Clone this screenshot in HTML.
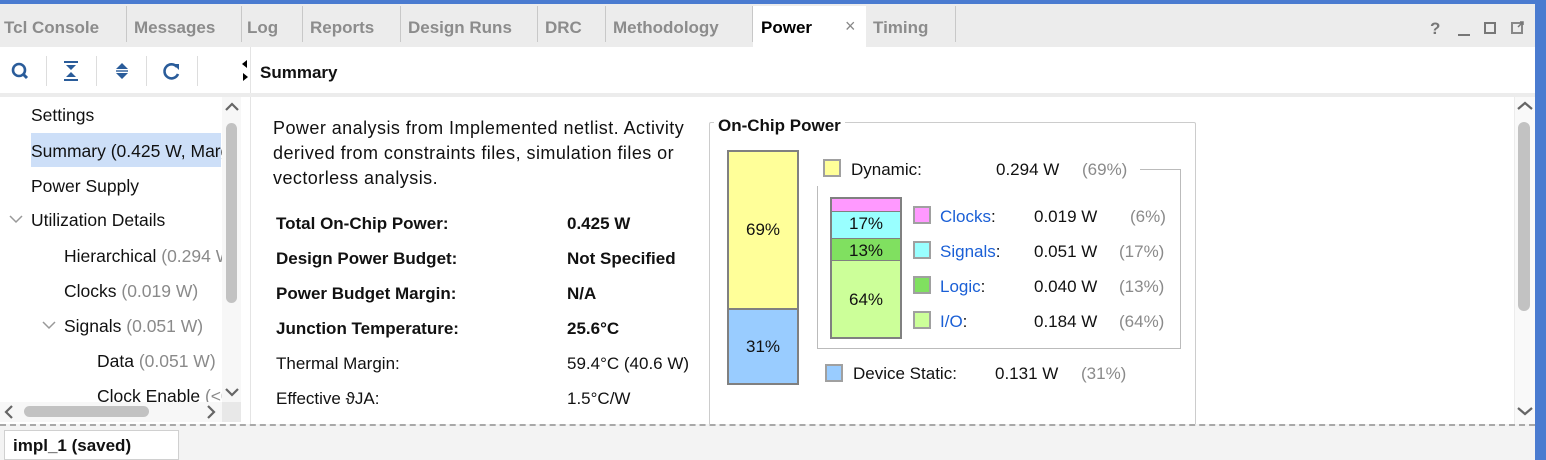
<!DOCTYPE html>
<html><head><meta charset="utf-8"><style>
*{margin:0;padding:0;box-sizing:border-box}
body{width:1546px;height:460px;overflow:hidden;background:#fff;font-family:"Liberation Sans",Arial,sans-serif;font-size:17px;color:#111;position:relative}
.a{position:absolute;white-space:nowrap}
.tab{position:absolute;top:18px;font-weight:bold;color:#8c8c8c;font-size:17px}
.sep{position:absolute;top:6px;width:1px;height:36px;background:#c8c8c8}
.g{color:#8a8a8a}
.b{font-weight:bold}
.lk{color:#1a5fd6}
.sq{position:absolute;width:18px;height:18px;border:2px solid #a0a0a0}
</style></head><body>
<div class="a" style="left:0;top:0;width:1546px;height:4px;background:#4a7bd0"></div>
<div class="a" style="left:1535px;top:0;width:11px;height:460px;background:#4a7bd0"></div>
<div class="a" style="left:0;top:4px;width:1535px;height:43px;background:#ececec"></div>
<div class="a" style="left:753px;top:6px;width:113px;height:41px;background:#fff"></div>
<span class="tab" style="left:4px">Tcl Console</span><div class="sep" style="left:126px"></div>
<span class="tab" style="left:134px">Messages</span><div class="sep" style="left:241px"></div>
<span class="tab" style="left:247px">Log</span><div class="sep" style="left:302px"></div>
<span class="tab" style="left:310px">Reports</span><div class="sep" style="left:400px"></div>
<span class="tab" style="left:408px">Design Runs</span><div class="sep" style="left:537px"></div>
<span class="tab" style="left:545px">DRC</span><div class="sep" style="left:605px"></div>
<span class="tab" style="left:613px">Methodology</span><div class="sep" style="left:752px"></div>
<span class="tab" style="left:761px;color:#000">Power</span>
<span class="a" style="left:845px;top:16px;color:#888;font-size:18px">×</span>
<span class="tab" style="left:873px">Timing</span><div class="sep" style="left:955px"></div>
<span class="a b" style="left:1430px;top:19px;color:#777;font-size:17px">?</span>
<div class="a" style="left:1458px;top:34px;width:12px;height:2px;background:#777"></div>
<div class="a" style="left:1484px;top:22px;width:12px;height:12px;border:2px solid #777"></div>
<div class="a" style="left:1511px;top:22px;width:12px;height:12px;border:2px solid #888"></div>
<svg class="a" style="left:1511px;top:20px" width="14" height="14"><path d="M7 7 L12 2 M9 2 H12 V5" stroke="#777" stroke-width="1.5" fill="none"/></svg>
<svg class="a" style="left:10px;top:61px" width="24" height="22"><circle cx="9" cy="9" r="6" stroke="#2a5c9a" stroke-width="2.6" fill="none"/><path d="M13 13 L17 17" stroke="#2a5c9a" stroke-width="3"/></svg>
<div class="a" style="left:46px;top:56px;width:1px;height:30px;background:#ddd"></div>
<svg class="a" style="left:62px;top:60px" width="18" height="22"><path d="M2 2H16M2 20H16" stroke="#2a5c9a" stroke-width="2"/><path d="M4 5L9 10L14 5ZM4 17L9 12L14 17Z" fill="#2a5c9a"/></svg>
<div class="a" style="left:96px;top:56px;width:1px;height:30px;background:#ddd"></div>
<svg class="a" style="left:113px;top:60px" width="18" height="22"><path d="M3 9L9 3L15 9ZM3 13L9 19L15 13Z" fill="#2a5c9a"/><path d="M3 11H15" stroke="#2a5c9a" stroke-width="1.4"/></svg>
<div class="a" style="left:146px;top:56px;width:1px;height:30px;background:#ddd"></div>
<svg class="a" style="left:162px;top:61px" width="20" height="20"><path d="M15 6 A7 7 0 1 0 16 13" stroke="#2a5c9a" stroke-width="2.6" fill="none"/><path d="M11 3 H17 V9 Z" fill="#2a5c9a"/></svg>
<div class="a" style="left:197px;top:56px;width:1px;height:30px;background:#ddd"></div>
<svg class="a" style="left:241px;top:58px" width="8" height="26"><path d="M6 2 L1 6 L6 10Z M2 15 L7 19 L2 23Z" fill="#000"/></svg>
<div class="a" style="left:250px;top:47px;width:1px;height:378px;background:#e4e4e4"></div>
<span class="a b" style="left:260px;top:63px;font-size:17px">Summary</span>
<div class="a" style="left:0;top:93px;width:1535px;height:4px;background:#ececec"></div>
<div class="a" style="left:31px;top:133px;width:190px;height:34px;background:#cddff8"></div>
<div class="a" style="left:0;top:97px;width:222px;height:305px;overflow:hidden;font-size:17.5px">
<span class="a" style="left:31px;top:8px">Settings</span>
<span class="a" style="left:31px;top:44px">Summary (0.425 W, Margin</span>
<span class="a" style="left:31px;top:79px">Power Supply</span>
<svg class="a" style="left:9px;top:117px" width="14" height="10"><path d="M1 2L7 8L13 2" stroke="#999" stroke-width="1.5" fill="none"/></svg>
<span class="a" style="left:31px;top:113px">Utilization Details</span>
<span class="a" style="left:64px;top:149px">Hierarchical <span class="g">(0.294 W)</span></span>
<span class="a" style="left:64px;top:184px">Clocks <span class="g">(0.019 W)</span></span>
<svg class="a" style="left:42px;top:223px" width="14" height="10"><path d="M1 2L7 8L13 2" stroke="#999" stroke-width="1.5" fill="none"/></svg>
<span class="a" style="left:64px;top:219px">Signals <span class="g">(0.051 W)</span></span>
<span class="a" style="left:97px;top:254px">Data <span class="g">(0.051 W)</span></span>
<span class="a" style="left:97px;top:289px">Clock Enable <span class="g">(&lt;0.001 W)</span></span>
</div>
<div class="a" style="left:222px;top:97px;width:19px;height:305px;background:#f7f7f7"></div>
<svg class="a" style="left:224px;top:101px" width="16" height="12"><path d="M2 9L8 3L14 9" stroke="#666" stroke-width="2.2" fill="none"/></svg>
<div class="a" style="left:226px;top:123px;width:11px;height:180px;background:#c2c2c2;border-radius:6px"></div>
<svg class="a" style="left:224px;top:386px" width="16" height="12"><path d="M2 3L8 9L14 3" stroke="#666" stroke-width="2.2" fill="none"/></svg>
<div class="a" style="left:0;top:402px;width:241px;height:20px;background:#f7f7f7"></div>
<svg class="a" style="left:3px;top:404px" width="12" height="16"><path d="M9 2L3 8L9 14" stroke="#666" stroke-width="2.2" fill="none"/></svg>
<div class="a" style="left:24px;top:406px;width:125px;height:11px;background:#c2c2c2;border-radius:6px"></div>
<svg class="a" style="left:205px;top:404px" width="12" height="16"><path d="M3 2L9 8L3 14" stroke="#666" stroke-width="2.2" fill="none"/></svg>
<div class="a" style="left:222px;top:402px;width:19px;height:20px;background:#e8e8e8"></div>
<div class="a" style="left:1514px;top:97px;width:21px;height:327px;background:#f9f9f9;border-left:1px solid #ececec"></div>
<svg class="a" style="left:1516px;top:100px" width="18" height="12"><path d="M2 9L9 3L16 9" stroke="#666" stroke-width="2.2" fill="none"/></svg>
<div class="a" style="left:1518px;top:122px;width:12px;height:189px;background:#c2c2c2;border-radius:6px"></div>
<svg class="a" style="left:1516px;top:405px" width="18" height="12"><path d="M2 3L9 9L16 3" stroke="#666" stroke-width="2.2" fill="none"/></svg>
<div class="a" style="left:273px;top:116px;line-height:25px;font-size:18px;letter-spacing:0.45px">Power analysis from Implemented netlist. Activity<br>derived from constraints files, simulation files or<br>vectorless analysis.</div>
<span class="a b" style="left:276px;top:214px">Total On-Chip Power:</span><span class="a b" style="left:567px;top:214px">0.425 W</span>
<span class="a b" style="left:276px;top:249px">Design Power Budget:</span><span class="a b" style="left:567px;top:249px">Not Specified</span>
<span class="a b" style="left:276px;top:284px">Power Budget Margin:</span><span class="a b" style="left:567px;top:284px">N/A</span>
<span class="a b" style="left:276px;top:319px">Junction Temperature:</span><span class="a b" style="left:567px;top:319px">25.6°C</span>
<span class="a" style="left:276px;top:354px">Thermal Margin:</span><span class="a" style="left:567px;top:354px">59.4°C (40.6 W)</span>
<span class="a" style="left:276px;top:389px">Effective ϑJA:</span><span class="a" style="left:567px;top:389px">1.5°C/W</span>
<div class="a" style="left:709px;top:122px;width:487px;height:310px;border:1px solid #ccc;border-radius:2px"></div>
<span class="a b" style="left:714px;top:116px;background:#fff;padding:0 4px">On-Chip Power</span>
<div class="a" style="left:727px;top:150px;width:72px;height:235px;border:2px solid #808080;background:#ffff99"></div>
<div class="a" style="left:729px;top:308px;width:68px;height:75px;background:#99ccff;border-top:2px solid #808080"></div>
<span class="a" style="left:746px;top:220px">69%</span>
<span class="a" style="left:746px;top:337px">31%</span>
<div class="sq" style="left:823px;top:159px;background:#ffff99"></div>
<span class="a" style="left:851px;top:160px">Dynamic:</span>
<span class="a" style="left:996px;top:160px">0.294 W</span>
<span class="a g" style="left:1082px;top:160px">(69%)</span>
<div class="a" style="left:1140px;top:169px;width:41px;height:180px;border-top:1px solid #bbb;border-right:1px solid #bbb"></div>
<div class="a" style="left:817px;top:186px;width:364px;height:163px;border-left:1px solid #bbb;border-bottom:1px solid #bbb"></div>
<div class="a" style="left:830px;top:197px;width:72px;height:142px;border:2px solid #808080;background:#ccff99"></div>
<div class="a" style="left:832px;top:199px;width:68px;height:12px;background:#ff99ff"></div>
<div class="a" style="left:832px;top:211px;width:68px;height:27px;background:#99ffff;border-top:1px solid #808080"></div>
<div class="a" style="left:832px;top:238px;width:68px;height:23px;background:#80e060;border-top:1px solid #808080;border-bottom:1px solid #808080"></div>
<span class="a" style="left:849px;top:214px">17%</span>
<span class="a" style="left:849px;top:241px">13%</span>
<span class="a" style="left:849px;top:290px">64%</span>
<div class="sq" style="left:913px;top:206px;background:#ff99ff"></div>
<div class="sq" style="left:913px;top:241px;background:#99ffff"></div>
<div class="sq" style="left:913px;top:276px;background:#80e060"></div>
<div class="sq" style="left:913px;top:311px;background:#ccff99"></div>
<span class="a" style="left:940px;top:207px"><span class="lk">Clocks</span>:</span>
<span class="a" style="left:940px;top:242px"><span class="lk">Signals</span>:</span>
<span class="a" style="left:940px;top:277px"><span class="lk">Logic</span>:</span>
<span class="a" style="left:940px;top:312px"><span class="lk">I/O</span>:</span>
<span class="a" style="left:1034px;top:207px">0.019 W</span>
<span class="a" style="left:1034px;top:242px">0.051 W</span>
<span class="a" style="left:1034px;top:277px">0.040 W</span>
<span class="a" style="left:1034px;top:312px">0.184 W</span>
<span class="a g" style="left:1130px;top:207px">(6%)</span>
<span class="a g" style="left:1119px;top:242px">(17%)</span>
<span class="a g" style="left:1119px;top:277px">(13%)</span>
<span class="a g" style="left:1119px;top:312px">(64%)</span>
<div class="sq" style="left:825px;top:364px;background:#99ccff"></div>
<span class="a" style="left:853px;top:364px">Device Static:</span>
<span class="a" style="left:995px;top:364px">0.131 W</span>
<span class="a g" style="left:1081px;top:364px">(31%)</span>
<div class="a" style="left:0;top:424px;width:1535px;height:36px;background:#f3f3f3;border-top:2px dashed #a8a8a8"></div>
<div class="a" style="left:4px;top:430px;width:175px;height:30px;background:#fff;border:1px solid #d0d0d0"></div>
<span class="a b" style="left:13px;top:436px">impl_1 (saved)</span>
</body></html>
